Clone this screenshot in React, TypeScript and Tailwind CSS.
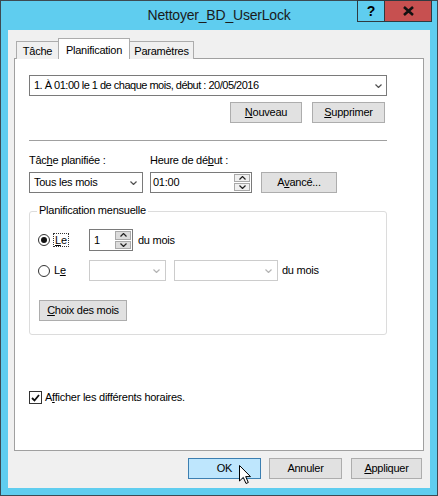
import React from 'react'

const font = "font-['Liberation_Sans',Arial,sans-serif]"

function Chevron({ down = true, color = '#505050' }: { down?: boolean; color?: string }) {
    return (
        <svg width="7" height="4" viewBox="0 0 7 4" className="block">
            <path d={down ? 'M0.5 0.5 L3.5 3.5 L6.5 0.5' : 'M0.5 3.5 L3.5 0.5 L6.5 3.5'} fill="none" stroke={color} strokeWidth="1.2" />
        </svg>
    )
}

function Btn({ w, children, className = '' }: { w: string; children: React.ReactNode; className?: string }) {
    return (
        <div className={`${w} h-[21px] flex items-center justify-center border border-[#adadad] bg-[#e1e1e1] ${className}`}>
            {children}
        </div>
    )
}

function Spin({ tone }: { tone: string }) {
    return (
        <div className="flex flex-col w-[17px] h-full py-[1px] pr-[1px] gap-[1px]">
            <div className={`flex-1 flex items-center justify-center border border-[#a9a9a9] ${tone}`}>
                <Chevron down={false} color="#202020" />
            </div>
            <div className={`flex-1 flex items-center justify-center border border-[#a9a9a9] ${tone}`}>
                <Chevron color="#202020" />
            </div>
        </div>
    )
}

function Radio({ checked }: { checked?: boolean }) {
    return (
        <div className="w-[12px] h-[12px] rounded-full border border-[#333] bg-white flex items-center justify-center">
            {checked && <div className="w-[6px] h-[6px] rounded-full bg-[#111]" />}
        </div>
    )
}

export default function App() {
    return (
        <div className={`${font} w-[438px] h-[496px] bg-[#5fcdef] border border-[#3d4a52] flex flex-col text-[11px] text-black tracking-[-0.25px]`}>
            {/* title bar */}
            <div className="relative h-[29px] flex items-center justify-center">
                <span className="text-[14px] text-[#1b1b1b] tracking-[-0.2px]">Nettoyer_BD_UserLock</span>
                <div className="absolute right-[5px] top-[-1px] flex h-[22px]">
                    <div className="w-[28px] h-full border border-[#2f3a40] flex items-center justify-center font-bold text-[14px] text-black">?</div>
                    <div className="w-[47px] h-full border border-l-0 border-[#2f3a40] bg-[#c75050] flex items-center justify-center">
                        <svg width="11" height="10" viewBox="0 0 11 10">
                            <path d="M1 1 L10 9 M10 1 L1 9" stroke="#111" strokeWidth="2.6" />
                        </svg>
                    </div>
                </div>
            </div>

            {/* client */}
            <div className="mx-[7px] h-[458px] bg-[#f0f0f0] pt-[8px] px-[6px] flex flex-col">
                {/* tabs */}
                <div className="flex items-end h-[21px] pl-[2px] -mb-px relative z-10">
                    <div className="w-[43px] h-[18px] border border-b-0 border-[#acacac] bg-[#f0f0f0] flex items-center justify-center pt-[1px]">Tâche</div>
                    <div className="w-[72px] h-[21px] -ml-px border border-b-0 border-[#acacac] bg-white flex items-start justify-center pt-[3px]">Planification</div>
                    <div className="w-[65px] h-[18px] -ml-px border border-b-0 border-[#acacac] bg-[#f0f0f0] flex items-center justify-center pt-[1px]">Paramètres</div>
                </div>

                {/* panel */}
                <div className="w-[410px] h-[393px] border border-[#a0a0a0] bg-white pl-[14px] pt-[16px] flex flex-col">
                    <div className="w-[358px] h-[21px] border border-[#7a7a7a] flex items-center justify-between pl-[4px] pr-[4px]">
                        <span className="tracking-[-0.5px]">1. À 01:00 le 1 de chaque mois, début : 20/05/2016</span>
                        <Chevron />
                    </div>

                    <div className="w-[358px] mt-[6px] flex justify-end gap-[10px] pr-[2px]">
                        <Btn w="w-[72px]"><span><u>N</u>ouveau</span></Btn>
                        <Btn w="w-[73px]"><span><u>S</u>upprimer</span></Btn>
                    </div>

                    <div className="w-[358px] h-px bg-[#a0a0a0] mt-[17px]" />

                    <div className="flex mt-[13px] h-[13px] leading-[13px]">
                        <span className="w-[121px]">Tâc<u>h</u>e planifiée :</span>
                        <span>Heure de dé<u>b</u>ut :</span>
                    </div>

                    <div className="flex mt-[5px] h-[21px]">
                        <div className="w-[114px] h-full border border-[#7a7a7a] flex items-center justify-between pl-[4px] pr-[5px]">
                            <span>Tous les mois</span>
                            <Chevron />
                        </div>
                        <div className="ml-[7px] w-[102px] h-full border border-[#7a7a7a] flex items-center justify-between pl-[2px]">
                            <span>01:00</span>
                            <Spin tone="bg-[#f0f0f0]" />
                        </div>
                        <Btn w="w-[76px]" className="ml-[9px]"><span>A<u>v</u>ancé...</span></Btn>
                    </div>

                    {/* group box */}
                    <div className="relative mt-[18px] w-[358px] h-[124px] border border-[#dcdcdc] rounded-[3px] flex flex-col">
                        <span className="absolute left-[7px] top-[-8px] bg-white px-[2px] leading-[13px]">Planification mensuelle</span>

                        <div className="flex items-center h-[22px] mt-[17px] pl-[8px]">
                            <div className="w-[51px] flex items-center">
                                <Radio checked />
                                <span className="ml-[3px] border border-dotted border-[#333] px-[1px] leading-[12px]"><u>L</u>e</span>
                            </div>
                            <div className="w-[44px] h-[22px] border border-[#7a7a7a] flex items-center justify-between pl-[4px]">
                                <span>1</span>
                                <Spin tone="bg-[#dcdcdc]" />
                            </div>
                            <span className="ml-[5px]">du mois</span>
                        </div>

                        <div className="flex items-center h-[21px] mt-[9px] pl-[8px]">
                            <div className="w-[51px] flex items-center">
                                <Radio />
                                <span className="ml-[4px]">L<u>e</u></span>
                            </div>
                            <div className="w-[77px] h-full border border-[#cccccc] flex items-center justify-end pr-[5px]">
                                <Chevron color="#b4b4b4" />
                            </div>
                            <div className="ml-[8px] w-[104px] h-full border border-[#cccccc] flex items-center justify-end pr-[5px]">
                                <Chevron color="#b4b4b4" />
                            </div>
                            <span className="ml-[4px]">du mois</span>
                        </div>

                        <Btn w="w-[88px]" className="mt-[19px] ml-[9px]"><span><u>C</u>hoix des mois</span></Btn>
                    </div>

                    <div className="flex items-center mt-[56px] h-[13px]">
                        <div className="w-[13px] h-[13px] border border-[#333] bg-white flex items-center justify-center">
                            <svg width="9" height="8" viewBox="0 0 9 8">
                                <path d="M1 4 L3.5 6.5 L8 1" fill="none" stroke="#111" strokeWidth="1.8" />
                            </svg>
                        </div>
                        <span className="ml-[3px]">A<u>f</u>ficher les différents horaires.</span>
                    </div>
                </div>

                {/* dialog buttons */}
                <div className="flex justify-end mt-[7px] pr-[2px]">
                    <div className="relative">
                        <Btn w="w-[73px]" className="!bg-[#bee6fd] !border-[#3c7fb1]"><span>OK</span></Btn>
                        <svg width="13" height="20" viewBox="0 0 13 20" className="absolute left-[51px] top-[7px]">
                            <path d="M0.5 0.5 L0.5 16 L4.3 12.4 L7 18.5 L9.3 17.5 L6.7 11.6 L11.5 11.6 Z" fill="#fff" stroke="#000" strokeWidth="1" />
                        </svg>
                    </div>
                    <Btn w="w-[73px]" className="ml-[8px]"><span>Annuler</span></Btn>
                    <Btn w="w-[71px]" className="ml-[9px]"><span><u>A</u>ppliquer</span></Btn>
                </div>
            </div>
        </div>
    )
}
